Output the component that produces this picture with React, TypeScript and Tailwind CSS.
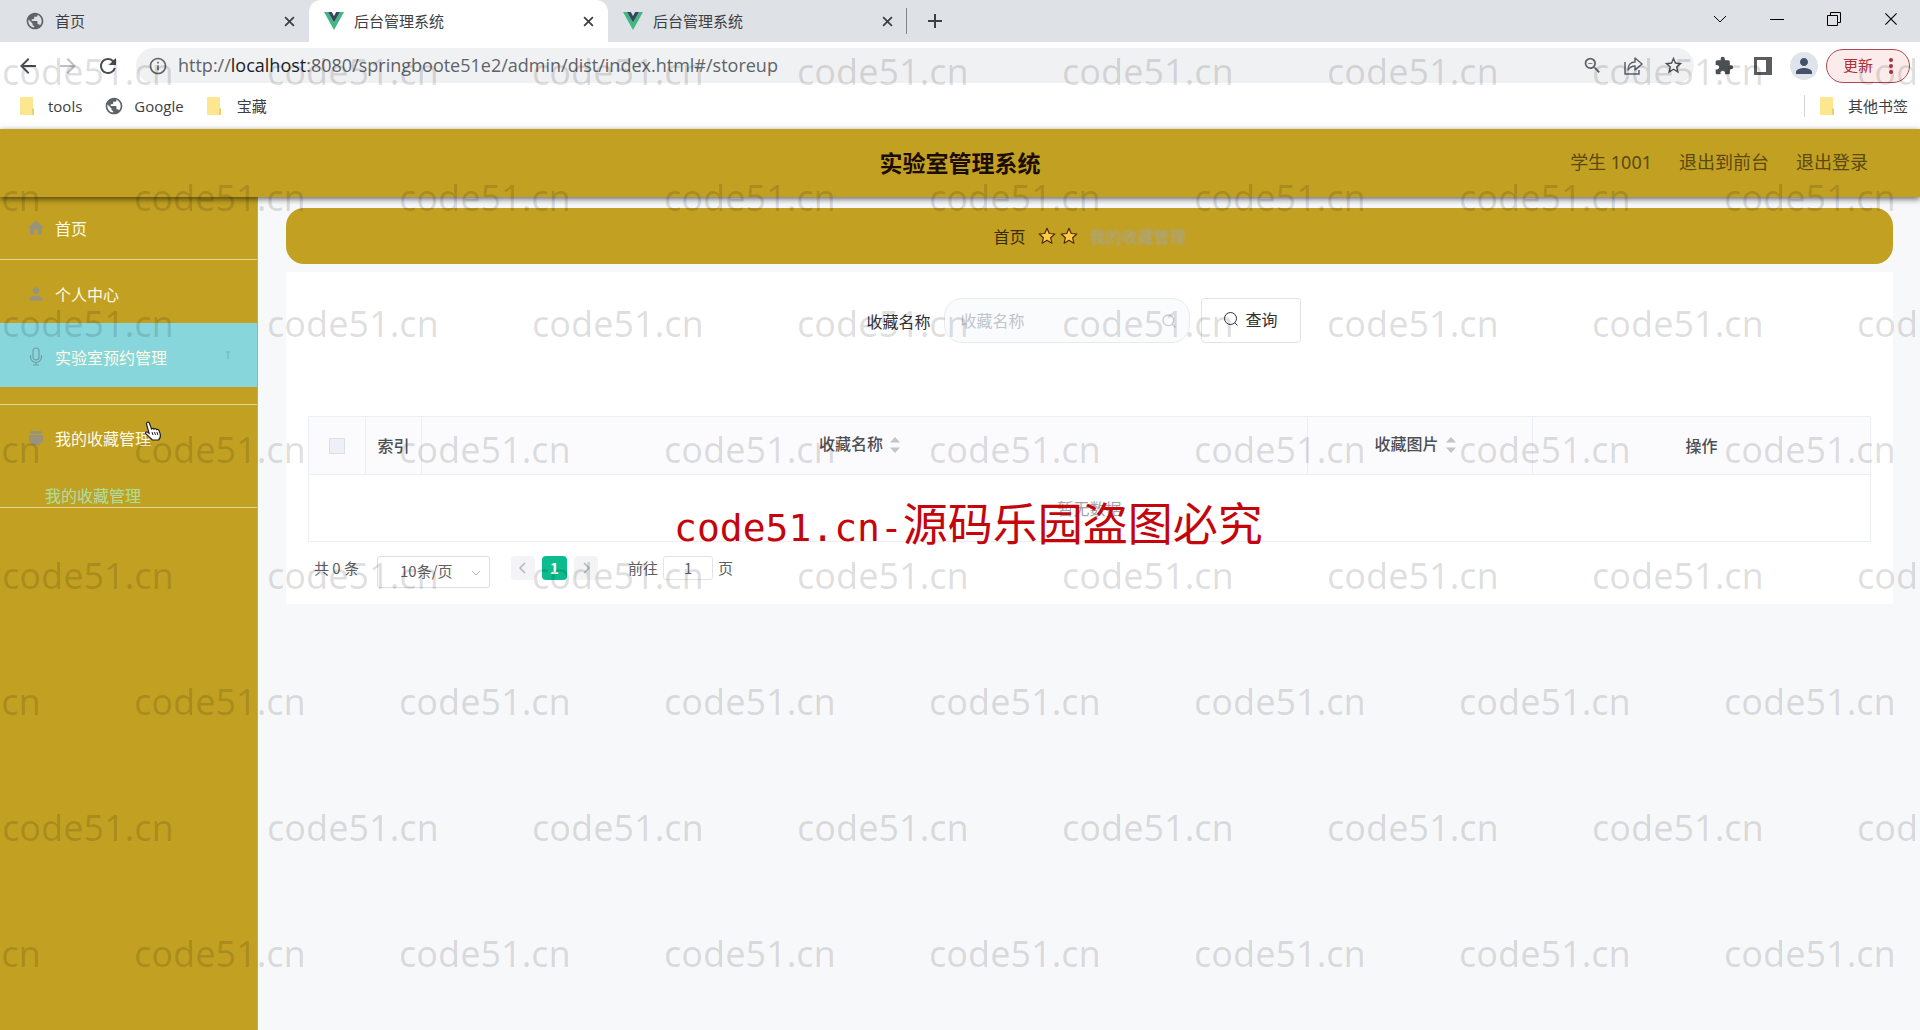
import type { ReactNode } from 'react'
import { LuSearch } from 'react-icons/lu'
import {
  MdArrowBack,
  MdArrowForward,
  MdExtension,
  MdHome,
  MdOutlineInfo,
  MdPerson,
  MdPublic,
  MdRefresh,
  MdStarBorder,
  MdZoomOut,
} from 'react-icons/md'

const tabs = [
  { title: '首页', vue: false, active: false },
  { title: '后台管理系统', vue: true, active: true },
  { title: '后台管理系统', vue: true, active: false },
]

function VueLogo() {
  return (
    <svg viewBox="0 0 20 18" className="h-[18px] w-5 shrink-0">
      <path d="M0 0h4l6 10.5L16 0h4L10 18z" fill="#41b883" />
      <path d="M4 0h3.8L10 4l2.2-4H16l-6 10.5z" fill="#35495e" />
    </svg>
  )
}

function Cross({ className }: { className: string }) {
  return (
    <svg viewBox="0 0 10 10" className={className} stroke="currentColor" fill="none">
      <path d="M1 1l8 8M9 1l-8 8" />
    </svg>
  )
}

function Folder() {
  return (
    <svg viewBox="0 0 16 18" className="h-[18px] w-4 shrink-0">
      <path d="M0 0h13v12l1 0v6H0z" fill="#fde690" />
      <path d="M12 12l2-1v7h-2z" fill="#edd06d" />
    </svg>
  )
}

function TabStrip() {
  return (
    <div className="flex h-[42px] items-stretch bg-[#dee1e6] text-[15px] text-[#3c4043]">
      {tabs.map((tab, i) => (
        <div
          key={i}
          className={`flex w-[299px] items-center pr-[14px] pl-[15px] first:w-[309px] first:pl-[25px] ${tab.active ? 'rounded-t-xl bg-white' : ''}`}
        >
          {tab.vue ? <VueLogo /> : <MdPublic className="size-5 text-[#5f6368]" />}
          <span className="ml-[10px] flex-1 pt-px">{tab.title}</span>
          <button aria-label="关闭标签页">
            <Cross className="size-[11px] stroke-[1.6]" />
          </button>
        </div>
      ))}
      <button aria-label="新标签页" className="-ml-px my-2 border-l border-[#80868b] pl-5">
        <svg viewBox="0 0 16 16" className="size-4" stroke="#3c4043" strokeWidth="2">
          <path d="M8 1v14M1 8h14" />
        </svg>
      </button>
      <div className="ml-auto flex items-center gap-[43px] pr-[22px] pb-1 text-black">
        <button aria-label="搜索标签页">
          <svg viewBox="0 0 14 14" className="size-[14px]" stroke="currentColor" fill="none">
            <path d="M1 4l6 6 6-6" />
          </svg>
        </button>
        <button aria-label="最小化">
          <svg viewBox="0 0 14 14" className="size-[14px]" stroke="currentColor">
            <path d="M0 7.5h14" />
          </svg>
        </button>
        <button aria-label="还原">
          <svg viewBox="0 0 14 14" className="size-[14px]" stroke="currentColor" fill="none">
            <path d="M.5 3.5h10v10h-10zM3.5 3V.5h10v10H11" />
          </svg>
        </button>
        <button aria-label="关闭">
          <Cross className="size-[14px] stroke-[0.8]" />
        </button>
      </div>
    </div>
  )
}

function AddressBar() {
  return (
    <div className="flex h-[47px] items-center bg-white pr-[10px] pl-4 text-[#5f6368]">
      <button aria-label="后退"><MdArrowBack className="size-6 text-[#4b4e52]" /></button>
      <button aria-label="前进" className="ml-4"><MdArrowForward className="size-6 text-[#bdc1c6]" /></button>
      <button aria-label="刷新" className="ml-4"><MdRefresh className="size-6 text-[#4b4e52]" /></button>
      <div className="ml-4 flex h-[35px] flex-1 items-center rounded-full bg-[#f0f1f3] pr-[10px] pl-3">
        <MdOutlineInfo className="size-5" />
        <p className="ml-[10px] flex-1 font-['Open_Sans','Noto_Sans',sans-serif] text-[18px]">
          http://<span className="text-[#202124]">localhost</span>:8080/springboote51e2/admin/dist/index.html#/storeup
        </p>
        <div className="flex items-center gap-5">
          <button aria-label="缩放"><MdZoomOut className="size-[21px] text-[#5f6368]" /></button>
          <button aria-label="分享">
            <svg viewBox="0 0 20 20" className="size-5" fill="none" stroke="currentColor" strokeWidth="1.5">
              <path d="M2 6v12h14v-4" />
              <path d="M12 6V2l7 6-7 6v-4c-3 0-5 1-7 4 0-5 3-8 7-8z" strokeLinejoin="round" />
            </svg>
          </button>
          <button aria-label="收藏"><MdStarBorder className="size-[21px] text-[#4b4e52]" /></button>
        </div>
      </div>
      <div className="ml-5 flex items-center">
        <button aria-label="扩展程序"><MdExtension className="size-5 text-[#4b4e52]" /></button>
        <button aria-label="侧边栏" className="ml-5">
          <svg viewBox="0 0 18 18" className="size-[18px]">
            <path d="M1.5 1.5h15v15h-15z" fill="none" stroke="#5a5c5f" strokeWidth="3" />
            <path d="M12 1h5v16h-5z" fill="#5a5c5f" />
          </svg>
        </button>
        <button aria-label="用户" className="ml-[18px] flex size-7 items-center justify-center rounded-full bg-[#dfe3ea]">
          <MdPerson className="size-6 text-[#42526b]" />
        </button>
        <button className="ml-2 flex h-[34px] items-center gap-4 rounded-full border border-[#b3474f] bg-[#fbeceb] pr-4 pl-4 text-[15px] text-[#b0303a]">
          更新
          <svg viewBox="0 0 4 18" className="h-[18px] w-1" fill="currentColor">
            <circle cx="2" cy="3" r="2" />
            <circle cx="2" cy="9" r="2" />
            <circle cx="2" cy="15" r="2" />
          </svg>
        </button>
      </div>
    </div>
  )
}

function Bookmarks() {
  return (
    <div className="flex h-10 items-center bg-white pr-3 pb-[6px] pl-5 font-['Open_Sans','Noto_Sans_CJK_SC',sans-serif] text-[15px] text-[#3c4043]">
      <a href="#tools" className="flex items-center gap-3"><Folder />tools</a>
      <a href="#google" className="ml-[22px] flex items-center gap-[10px]"><MdPublic className="size-5 text-[#5f6368]" />Google</a>
      <a href="#treasure" className="ml-[23px] flex items-center gap-[14px]"><Folder />宝藏</a>
      <a href="#other" className="ml-auto flex items-center gap-3 border-l border-[#d0d3d8] pl-[15px]"><Folder />其他书签</a>
    </div>
  )
}

function Header() {
  return (
    <header className="relative grid h-[68px] grid-cols-[1fr_auto_1fr] items-center bg-[#c2a022] pb-[2px] shadow-[0_2px_6px_rgba(0,0,0,0.6)]">
      <h1 className="col-start-2 text-[23px] font-bold text-[#1c0d04]">实验室管理系统</h1>
      <nav className="flex justify-end gap-[27px] pr-[52px] font-['Noto_Sans','Noto_Sans_CJK_SC',sans-serif] text-[18px] text-[#5b4912]">
        <span>学生 1001</span>
        <a href="#front">退出到前台</a>
        <a href="#logout">退出登录</a>
      </nav>
    </header>
  )
}

function MenuItem({ icon, label, className }: { icon: ReactNode; label: string; className: string }) {
  return (
    <a href="#menu" className={`flex items-center gap-[9px] pl-[26px] ${className}`}>
      {icon}
      {label}
    </a>
  )
}

function Sidebar() {
  const icon = 'size-5 text-[#9a937c]'
  return (
    <aside className="w-[258px] shrink-0 border-r border-[#b5a88a] bg-[#c2a022] text-[16px] leading-6 text-[#fffbe6]">
      <MenuItem icon={<MdHome className={icon} />} label="首页" className="h-[63px] border-b border-[#e6d58f]" />
      <MenuItem icon={<MdPerson className={icon} />} label="个人中心" className="h-[63px] pt-1" />
      <div className="border-b border-[#e6d58f] pb-[17px]">
        <div className="flex items-center bg-[#87d6dc] pr-[26px]">
          <MenuItem
            icon={
              <svg viewBox="0 0 20 20" className="size-5" fill="none" stroke="#6f9fa6" strokeWidth="1.2">
                <rect x="7" y="1" width="6" height="12" rx="3" />
                <path d="M4.500 8v2a5.500 5.500 0 0 0 11 0V8M10 15.500v2.500M7 18h6" />
              </svg>
            }
            label="实验室预约管理"
            className="h-16 flex-1 pt-1"
          />
          <svg viewBox="0 0 6 8" className="h-2 w-[6px]" fill="none" stroke="#78bfc6" strokeWidth="1.5">
            <path d="M1 1h4M3 1v7" />
          </svg>
        </div>
      </div>
      <MenuItem
        icon={
          <svg viewBox="0 0 20 20" className="size-5" fill="#9a937c">
            <path d="M5 3h10l1 3H4zM3 7h14v7h-2l-1 3H6l-1-3H3z" />
          </svg>
        }
        label="我的收藏管理"
        className="h-[66px]"
      />
      <a href="#storeup" className="flex h-[37px] items-end border-b border-[#e6d58f] pl-[45px] text-[#a9e0a2]">我的收藏管理</a>
    </aside>
  )
}

function Star() {
  return (
    <svg viewBox="0 0 20 20" className="size-[18px]">
      <path
        d="M10 1.500l2.500 5.700 6.200.6-4.700 4.100 1.400 6.100L10 14.800 4.600 18 6 11.900 1.300 7.800l6.200-.6z"
        fill="#ffc84a"
        stroke="#4a2a08"
        strokeWidth="1.300"
        strokeLinejoin="round"
      />
    </svg>
  )
}

function SortLabel({ children }: { children: ReactNode }) {
  return (
    <span className="flex items-center justify-center gap-[7px] pr-[10px] pb-[5px]">
      {children}
      <svg viewBox="0 0 10 16" className="mt-1 h-4 w-[10px]" fill="#c0c4cc">
        <path d="M5 0l5 5.500H0zM5 16l5-5.500H0z" />
      </svg>
    </span>
  )
}

function SearchForm() {
  return (
    <form className="flex h-[45px] items-center justify-center pr-3 text-[16px] text-[#303133]">
      <label htmlFor="name">收藏名称</label>
      <div className="ml-[13px] flex h-full w-[246px] items-center rounded-[18px] border border-[#e8eaee] bg-[#fafbfc] pr-3 pl-4">
        <input id="name" placeholder="收藏名称" className="min-w-0 flex-1 bg-transparent pb-[2px] outline-none placeholder:text-[#c0c4cc]" />
        <LuSearch className="size-4 text-[#c8ccd2]" />
      </div>
      <button type="button" className="ml-[11px] flex h-full w-[100px] items-center justify-center gap-[6px] rounded border border-[#e0e2e6] bg-white pb-1">
        <svg viewBox="0 0 16 16" className="size-4" fill="none" stroke="currentColor">
          <circle cx="7.500" cy="7.500" r="6" />
          <path d="M12 12l2.500 2.500" />
        </svg>
        查询
      </button>
    </form>
  )
}

function DataTable() {
  const th = 'border border-[#ebeef5] font-medium'
  return (
    <table className="w-full table-fixed border-collapse text-[16px] text-[#4d4f53]">
      <colgroup>
        <col className="w-[57px]" />
        <col className="w-[56px]" />
        <col />
        <col className="w-[225px]" />
        <col className="w-[338px]" />
      </colgroup>
      <thead className="h-[58px] bg-[#fbfbfd]">
        <tr>
          <th className={th}>
            <input type="checkbox" aria-label="全选" className="mx-auto block size-4 appearance-none border border-[#dcdfe6] bg-[#edf0f7]" />
          </th>
          <th className={`${th} pb-[2px]`}>索引</th>
          <th className={th}><SortLabel>收藏名称</SortLabel></th>
          <th className={th}><SortLabel>收藏图片</SortLabel></th>
          <th className={`${th} pb-[2px]`}>操作</th>
        </tr>
      </thead>
      <tbody>
        <tr>
          <td colSpan={5} className="h-[67px] border border-[#ebeef5] text-center text-[#a0a3a8]">暂无数据</td>
        </tr>
      </tbody>
    </table>
  )
}

function Pagination() {
  return (
    <div className="flex items-start pl-[6px] text-[15px] leading-6 text-[#5c5f64]">
      <span>共 0 条</span>
      <div className="relative ml-[18px]">
        <select aria-label="每页条数" className="block h-8 w-[113px] appearance-none rounded-[3px] border border-[#dcdfe6] bg-white pb-[2px] pl-[22px] text-[15px]">
          <option>10条/页</option>
        </select>
        <svg viewBox="0 0 10 10" className="pointer-events-none absolute top-3 right-[9px] size-[10px]" fill="none" stroke="#b4b7bd">
          <path d="M1 3l4 4 4-4" />
        </svg>
      </div>
      <button aria-label="上一页" className="ml-[21px] flex h-6 w-6 items-center justify-center rounded-sm bg-[#f4f4f6]">
        <svg viewBox="0 0 10 12" className="h-3 w-[10px]" fill="none" stroke="#b4b7bd" strokeWidth="1.5"><path d="M7 1L2 6l5 5" /></svg>
      </button>
      <button className="ml-[7px] h-6 w-[25px] rounded-sm bg-[#0dbc8e] font-bold text-white">1</button>
      <button aria-label="下一页" className="ml-[7px] flex h-6 w-6 items-center justify-center rounded-sm bg-[#f4f4f6]">
        <svg viewBox="0 0 10 12" className="h-3 w-[10px]" fill="none" stroke="#b4b7bd" strokeWidth="1.5"><path d="M3 1l5 5-5 5" /></svg>
      </button>
      <label htmlFor="page" className="ml-[30px]">前往</label>
      <input id="page" defaultValue="1" className="mx-[5px] h-6 w-[50px] rounded-[3px] border border-[#e2e4e9] bg-white text-center" />
      <span>页</span>
    </div>
  )
}

function Watermark() {
  return (
    <div className="pointer-events-none absolute inset-0 overflow-hidden font-['Noto_Sans',sans-serif] text-[36px] whitespace-nowrap text-black/13 select-none">
      <div className="pt-[9px]">
        {Array.from({ length: 8 }, (_, row) => (
          <div key={row} className={`flex h-[126px] items-center ${row % 2 ? '-ml-[131px]' : 'ml-[2px]'}`}>
            {Array.from({ length: 8 }, (_, col) => (
              <span key={col} className="w-[265px] shrink-0">code51.cn</span>
            ))}
          </div>
        ))}
      </div>
      <p className="absolute top-[488px] left-[674px] flex items-baseline text-[45px] text-[#c4060c]">
        <span className="font-['DejaVu_Sans_Mono',monospace] text-[38px]">code51.cn-</span>
        <span className="font-['Noto_Sans_CJK_SC',sans-serif]">源码乐园盗图必究</span>
      </p>
    </div>
  )
}

function HandCursor() {
  return (
    <svg viewBox="0 0 18 20" className="pointer-events-none absolute top-[421px] left-[144px] h-5 w-[18px]">
      <path
        d="M3 1.500c1-.8 2-.3 2.400.7L7.500 8c1-1 2-.8 2.600.2.900-.9 2-.5 2.500.4 1-.6 2-.1 2.400.8l1.300 4c.4 2-.2 4-1.800 5.600H8.500C6 17 4 15 1.500 12.500c-.5-1.200.8-2 2-1.300l1.500 1L2.500 3c-.2-.6 0-1.200.5-1.500z"
        fill="#fff"
        stroke="#222"
        strokeWidth="1.200"
      />
      <path d="M8 11l1 3M10.500 11l1 3M13 11l.8 3" stroke="#222" />
    </svg>
  )
}

export default function App() {
  return (
    <div className="relative flex min-h-screen flex-col overflow-hidden bg-[#f7f8fa] font-['Noto_Sans_CJK_SC',sans-serif]">
      <TabStrip />
      <AddressBar />
      <Bookmarks />
      <Header />
      <div className="flex flex-1">
        <Sidebar />
        <main className="min-w-0 flex-1 pt-[11px] pr-[27px] pl-7">
          <nav className="flex h-14 items-center justify-center rounded-[18px] bg-[#c2a022] text-[16px]">
            <a href="#home" className="text-[#3a2c08]">首页</a>
            <span className="mx-3 flex gap-1"><Star /><Star /></span>
            <span className="text-[#a6a69c] blur-[1px]">我的收藏管理</span>
          </nav>
          <section className="mt-2 bg-white px-[22px] pt-[26px] pb-4">
            <SearchForm />
            <div className="mt-[73px] mb-[14px]">
              <DataTable />
            </div>
            <Pagination />
          </section>
        </main>
      </div>
      <HandCursor />
      <Watermark />
    </div>
  )
}
